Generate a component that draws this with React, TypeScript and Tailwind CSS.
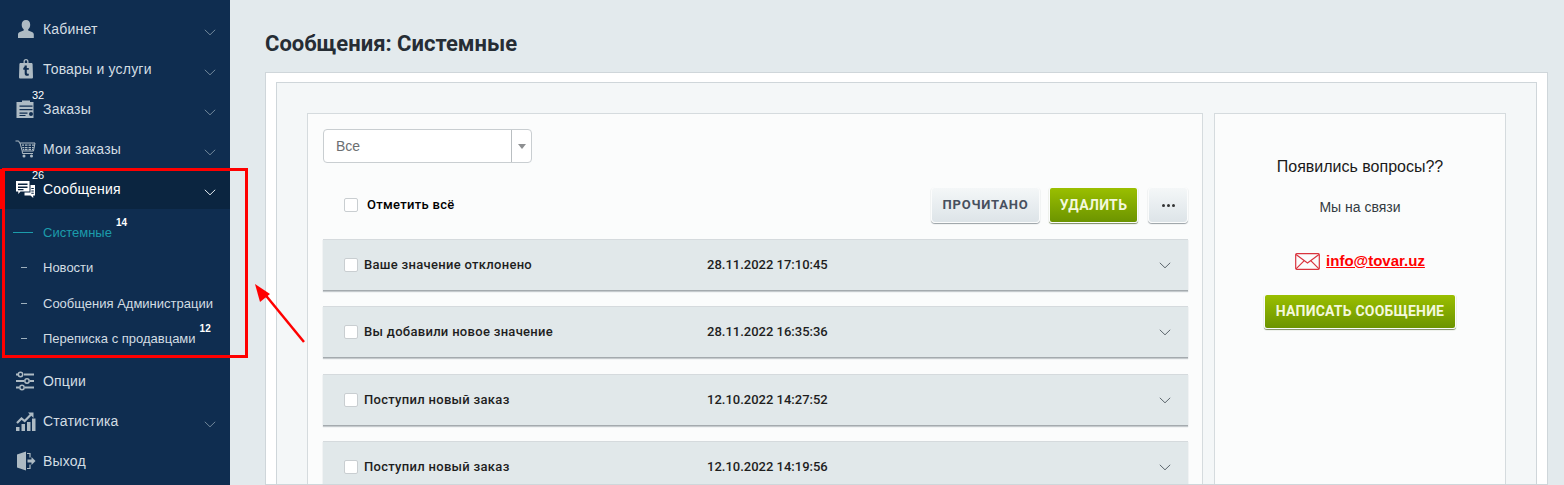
import type { ReactNode } from "react";

const Chevron = ({ className }: { className: string }) => (
  <svg width="12" height="7" viewBox="0 0 12 7" fill="none" className={className}>
    <path d="M.8.8 6 5.800 11.200.8" stroke="currentColor" strokeWidth="1" />
  </svg>
);

const icons: Record<string, ReactNode> = {
  user: (
    <path d="M11 2c2.700 0 4.200 2 4.200 4.700 0 2-.8 3.600-2 4.500v1.300l3.800 1.500c1.200.5 1.800 1.200 1.800 2.500V20H3v-3.500c0-1.300.6-2 1.800-2.500l3.900-1.500v-1.300c-1.200-.9-2-2.500-2-4.500C6.700 4 8.300 2 11 2Z" />
  ),
  tag: (
    <>
      <path
        fillRule="evenodd"
        d="M8.500 5V3.500a2.500 2.500 0 0 1 5 0V5h2.800c.8 0 1.200.4 1.300 1.100L18 19c0 1-.5 1.500-1.400 1.500H5.400C4.500 20.500 4 20 4 19l.4-12.900C4.500 5.400 4.900 5 5.700 5h2.800Zm1.300 0h2.400V3.500a1.200 1.200 0 0 0-2.400 0V5Z"
      />
      <path d="M9.700 7.500h2.100v2.400h2v1.900h-2v3.300c0 .7.600.9 2 .6v1.900c-2.800.6-4.100-.3-4.100-2.200v-3.600H8.300V10c.9-.4 1.300-1.200 1.400-2.500Z" fill="#0f2d50" />
    </>
  ),
  orders: (
    <path
      fillRule="evenodd"
      d="M7 4V2.500h8V4h3.500v16h-17V4H7Zm-2.500 3.500v1.200h13V7.500h-13Zm0 3.500v1.200h13V11h-13Zm0 3.500v1.200h8v-1.200h-8Zm0 2.500v1h6v-1h-6Zm11.500-3a2 2 0 1 0 0 4 2 2 0 0 0 0-4Z"
    />
  ),
  cart: (
    <>
      <path d="M.5 3h3.200l.8 2H20l-1.500 8H7.200L5 5M7.200 13l.3 2.500H18" fill="none" stroke="currentColor" strokeWidth="1" />
      <path d="M7 6.500h2v1.300H7zM10 6.500h2.500v1.300H10zM13.500 6.500H16v1.300h-2.500zM17 6.500h2v1.300h-2zM7.300 9h2v1.300h-2zM10 9h2.500v1.300H10zM13.500 9H16v1.300h-2.500zM17 9h1.700v1.300H17zM7.800 11h1.500v1.300H7.800zM10 11h2.500v1.300H10zM13.500 11H16v1.300h-2.500zM17 11h1.300v1.300H17z" />
      <circle cx="9" cy="18" r="1.500" />
      <circle cx="16.500" cy="18" r="1.500" />
    </>
  ),
  messages: (
    <>
      <path
        fillRule="evenodd"
        d="M1 3h13.500v10.500H5.500L3.300 16v-2.500H1V3Zm2 2.500v1.400h9.500V5.500H3Zm0 3v1.400h9.500V8.500H3Zm0 2.600v1.200h5.500v-1.200H3Z"
      />
      <path
        fillRule="evenodd"
        d="M15.500 7H20v10.500h-1.800V20l-2.700-2.500h-6V14.500h6V7Zm.8 3v1h2.500v-1h-2.500Zm0 2.500v1h2.500v-1h-2.500Zm0 2.300v1h2.500v-1h-2.500Z"
      />
    </>
  ),
  options: (
    <>
      <path d="M9 4.500h10M1 4.500h2M1 11h8M15 11h4M10 17.500h9M1 17.500h3" fill="none" stroke="currentColor" strokeWidth="2" />
      <circle cx="5.500" cy="4.500" r="2.200" fill="none" stroke="currentColor" strokeWidth="1.500" />
      <circle cx="12" cy="11" r="2.200" fill="none" stroke="currentColor" strokeWidth="1.500" />
      <circle cx="7" cy="17.500" r="2.200" fill="none" stroke="currentColor" strokeWidth="1.500" />
    </>
  ),
  stats: (
    <>
      <path d="M1 17h3.500v4H1zM6.500 14H10v7H6.500zM12 12h3.500v9H12zM17 8.500h3.500V21H17z" />
      <path d="m2 13 4.500-4.500 3.200 2.500L16 4.500" fill="none" stroke="currentColor" strokeWidth="2.200" />
      <path d="M13 2.500h5.500V8Z" />
    </>
  ),
  logout: (
    <>
      <path d="M2 4.500 11 1.500v19l-9-3v-13Z" />
      <path d="M12 3.500h3v4M15 14.500v4h-3" fill="none" stroke="currentColor" strokeWidth="1.200" />
      <path d="M12.500 9.500h4V7l4 4-4 4v-2.500h-4v-3Z" />
    </>
  ),
};

type NavItem = { label: string; icon: string; badge?: string; chevron?: boolean };

const NavRow = ({ label, icon, badge, chevron = true, active }: NavItem & { active?: boolean }) => (
  <div className={`relative flex h-10 items-center pr-[14px] ${active ? "border-l-2 border-[#f00] bg-[#0b2540] pl-[13px] text-white" : "pl-[15px] text-[#d3dde3]"}`}>
    <svg width="22" height="22" viewBox="0 0 22 22" fill="currentColor" className={`mr-1.5 shrink-0 ${active ? "text-white" : "text-[#aebbc4]"}`}>
      {icons[icon]}
    </svg>
    <span className="text-[14px] tracking-[0.2px]">{label}</span>
    {chevron && <Chevron className={`ml-auto mt-[6px] ${active ? "text-[#e4ebef]" : "text-[#71879a]"}`} />}
    {badge && <span className={`absolute top-0 text-[11px] leading-[13px] text-white ${active ? "left-[30px]" : "left-8"}`}>{badge}</span>}
  </div>
);

const SubRow = ({ label, badge, active }: { label: string; badge?: string; active?: boolean }) => (
  <div className="flex h-[35.500px] items-center">
    <span className={`h-px shrink-0 ${active ? "ml-[13px] mr-[10px] w-5 bg-[#1c9cab]" : "ml-[21px] mr-[16px] w-1.5 bg-[#9fb0bd]"}`} />
    <span className={`text-[13px] ${active ? "text-[#1c9cab]" : "text-[#d3dde3]"}`}>{label}</span>
    {badge && <span className="mb-[19px] ml-1 text-[10px] font-bold leading-none text-white">{badge}</span>}
  </div>
);

const Sidebar = () => (
  <aside className="h-[485px] w-[230px] shrink-0 bg-[#0f2d50] pt-[9px] font-['Liberation_Sans',sans-serif]">
    <NavRow label="Кабинет" icon="user" />
    <NavRow label="Товары и услуги" icon="tag" />
    <NavRow label="Заказы" icon="orders" badge="32" />
    <NavRow label="Мои заказы" icon="cart" />
    <NavRow label="Сообщения" icon="messages" badge="26" active />
    <div className="h-[152px] pt-[5.500px]">
      <SubRow label="Системные" badge="14" active />
      <SubRow label="Новости" />
      <SubRow label="Сообщения Администрации" />
      <SubRow label="Переписка с продавцами" badge="12" />
    </div>
    <NavRow label="Опции" icon="options" chevron={false} />
    <NavRow label="Статистика" icon="stats" />
    <NavRow label="Выход" icon="logout" chevron={false} />
  </aside>
);

const Box = () => <span className="block size-[14px] shrink-0 rounded-[2px] border border-[#c9ced1] bg-white" />;

const Message = ({ title, date }: { title: string; date: string }) => (
  <div className="flex h-[52px] shrink-0 items-center border-y border-t-[#d5dadd] border-b-[#a4aaae] bg-[#e1e8ea] pl-[21px] pr-[17px] shadow-[0_1px_1px_#c5cacd]">
    <Box />
    <span className="ml-[6px] w-[343px] font-['Roboto',sans-serif] text-[13px] font-medium tracking-[0.3px] text-[#1e1e1e]">{title}</span>
    <span className="font-['Roboto',sans-serif] text-[13px] font-medium text-[#1e1e1e]">{date}</span>
    <Chevron className="ml-auto mt-px text-[#5c666d]" />
  </div>
);

const GreenButton = ({ label, className }: { label: string; className: string }) => (
  <button className={`flex items-center justify-center rounded-[3px] border border-[#fbfcfc] bg-gradient-to-b from-[#9abf00] to-[#6c9400] font-['Roboto',sans-serif] text-[14px] font-bold text-[#f3f8dc] shadow-[0_1px_1px_#7b8a60] ${className}`}>
    {label}
  </button>
);

const Main = () => (
  <main className="min-w-0 flex-1 pl-[35px] pr-4">
    <h1 className="flex h-[72px] items-center pt-[14px] font-['Roboto',sans-serif] text-[22px] font-bold text-[#262d35]">Сообщения: Системные</h1>
    <div className="h-[413px] overflow-hidden border border-[#cfd6da] bg-white px-[10px] pt-[9px]">
      <div className="flex h-[500px] gap-[11px] border border-[#cfd6da] bg-[#f4f7f8] pl-[30px] pr-[30px] pt-[30px]">
        <section className="flex w-[896px] shrink-0 flex-col border border-[#d5dbde] bg-[#fbfcfc] pl-[15px] pr-[14px] pt-[15px]">
          <div className="flex h-[34px] w-[209px] items-center rounded-[4px] border border-[#c9ced1] bg-white font-['Liberation_Sans',sans-serif] text-[14px] text-[#6c6f72]">
            <span className="flex-1 pl-[12px]">Все</span>
            <span className="flex h-full w-5 items-center justify-center border-l border-[#b9bec1]">
              <span className="size-0 border-x-[4px] border-t-[5px] border-x-transparent border-t-[#8d8f91]" />
            </span>
          </div>
          <div className="mt-6 flex h-9 items-center pl-[21px]">
            <Box />
            <span className="ml-[9px] font-['Roboto',sans-serif] text-[13px] font-medium tracking-[0.3px] text-black">Отметить всё</span>
            <button className="ml-auto h-9 w-[109px] rounded-[4px] border border-[#fbfcfc] bg-gradient-to-b from-[#f4f7f8] to-[#dde4e8] font-['Roboto',sans-serif] text-[13px] font-bold tracking-[0.8px] text-[#47505e] shadow-[0_1px_1px_#979fa4]">ПРОЧИТАНО</button>
            <GreenButton label="УДАЛИТЬ" className="ml-[9px] h-9 w-[89px] tracking-[0.3px]" />
            <button className="ml-[10px] flex h-9 w-10 items-center justify-center gap-[2px] rounded-[4px] border border-[#fbfcfc] bg-gradient-to-b from-[#f4f7f8] to-[#dde4e8] shadow-[0_1px_1px_#979fa4]">
              <span className="size-[3px] rounded-full bg-[#333]" />
              <span className="size-[3px] rounded-full bg-[#333]" />
              <span className="size-[3px] rounded-full bg-[#333]" />
            </button>
          </div>
          <div className="mt-[15.500px] flex flex-col gap-[15.500px]">
            <Message title="Ваше значение отклонено" date="28.11.2022 17:10:45" />
            <Message title="Вы добавили новое значение" date="28.11.2022 16:35:36" />
            <Message title="Поступил новый заказ" date="12.10.2022 14:27:52" />
            <Message title="Поступил новый заказ" date="12.10.2022 14:19:56" />
          </div>
        </section>
        <section className="flex w-[292px] shrink-0 flex-col items-center border border-[#d5dbde] bg-[#fbfcfc] pt-[43px] font-['Liberation_Sans',sans-serif]">
          <p className="text-[16px] leading-5 text-[#1a1a1a]">Появились вопросы??</p>
          <p className="mt-[20px] text-[14px] leading-5 text-[#333b42]">Мы на связи</p>
          <div className="mt-[33px] flex items-center gap-[6px]">
            <svg width="25" height="17" viewBox="0 0 25 17" fill="none" stroke="#d9343e" strokeWidth="1.200">
              <rect x=".7" y=".7" width="23.600" height="15.600" rx="1" />
              <path d="m1 1.500 11.500 8.500L24 1.500M1 15.800 9 7.800M24 15.800l-8-8" />
            </svg>
            <a className="text-[15px] font-bold text-[#f00] underline">info@tovar.uz</a>
          </div>
          <GreenButton label="НАПИСАТЬ СООБЩЕНИЕ" className="mt-[21px] h-[35px] w-[192px] tracking-[0.2px]" />
        </section>
      </div>
    </div>
  </main>
);

export default function App() {
  return (
    <div className="relative flex h-[485px] w-[1564px] overflow-hidden bg-[#e3eaed]">
      <Sidebar />
      <Main />
      {/* red annotation painted over the screenshot */}
      <div className="absolute left-[2px] top-[168px] h-[190px] w-[246px] border-[3px] border-[#f00]" />
      <svg className="absolute left-[250px] top-[280px]" width="60" height="68" viewBox="0 0 60 68" fill="none">
        <path d="M54 62 13 12" stroke="#f00" strokeWidth="2.500" />
        <path d="M5 4 20 14 10 22Z" fill="#f00" />
      </svg>
    </div>
  );
}
